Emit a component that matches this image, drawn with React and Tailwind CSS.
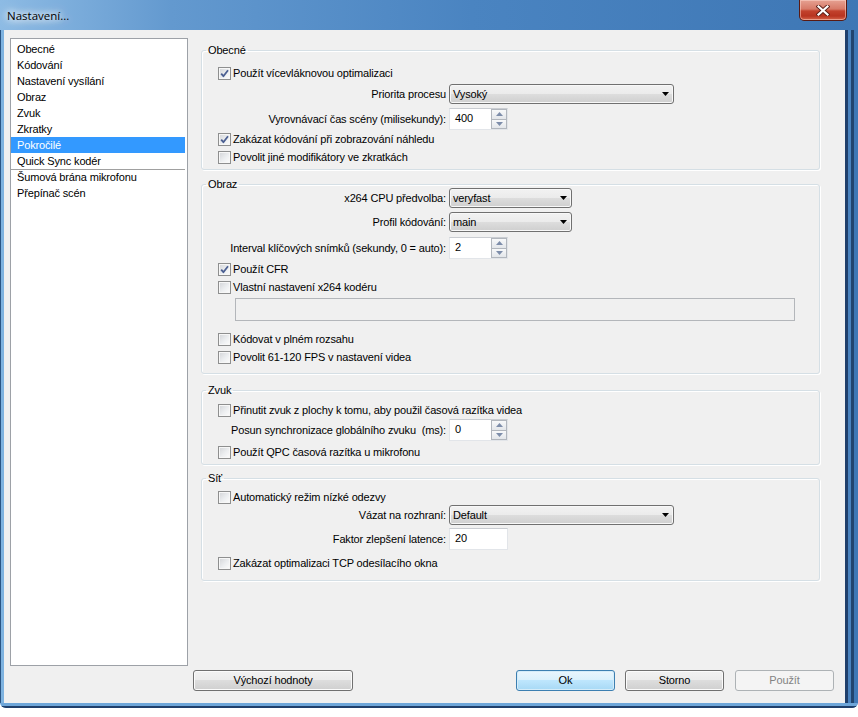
import React from "react";

function Box({ checked }) {
  return (
    <span className="flex w-[13px] h-[13px] shrink-0 border border-[#8e8f8f] bg-[#f7f7f7] p-px">
      <span className="flex flex-1 items-center justify-center bg-[linear-gradient(135deg,#d6d8db_0%,#eceef0_55%,#fafafa_100%)]">
        {checked && (
          <svg width="9" height="9" viewBox="0 0 9 9">
            <path d="M1.2 4.6 L3.4 7.2 L8 1.2" fill="none" stroke="#4b5f92" strokeWidth="1.8" strokeLinejoin="round" />
          </svg>
        )}
      </span>
    </span>
  );
}

function CheckRow({ checked, label, cls }) {
  return (
    <div className={"flex items-center " + cls}>
      <Box checked={checked} />
      <span className="ml-[2px] whitespace-nowrap">{label}</span>
    </div>
  );
}

function FieldRow({ label, cls, children }) {
  return (
    <div className={"flex items-center " + cls}>
      <div className="w-[228px] flex justify-end whitespace-pre">
        <span className="shrink-0">{label}</span>
      </div>
      <div className="ml-[3px] flex">{children}</div>
    </div>
  );
}

function Combo({ value, cls }) {
  return (
    <div className={"flex items-center h-[20px] border border-[#707070] rounded-[3px] bg-[linear-gradient(#f2f2f2_0%,#ebebeb_50%,#dddddd_50%,#cfcfcf_100%)] shadow-[inset_0_0_0_1px_#f8f8f8] pl-[3px] pr-[4px] " + cls}>
      <span className="flex-1 whitespace-nowrap">{value}</span>
      <svg width="7" height="4" viewBox="0 0 7 4">
        <path d="M0 0 H7 L3.5 4 Z" fill="#000" />
      </svg>
    </div>
  );
}

function SpinBtn({ up }) {
  return (
    <div className={"flex flex-1 items-center justify-center border border-[#b1b6bd] bg-[linear-gradient(#f8f9fa,#e3e6ea)] " + (up ? "" : "border-t-0")}>
      <svg width="7" height="4" viewBox="0 0 7 4">
        {up ? <path d="M0 4 L3.5 0 L7 4 Z" fill="#7d8daa" /> : <path d="M0 0 H7 L3.5 4 Z" fill="#7d8daa" />}
      </svg>
    </div>
  );
}

function Spin({ value }) {
  return (
    <div className="flex w-[59px] h-[22px] bg-white border border-[#e2e5e9] border-t-[#c9ccd1]">
      <div className="flex-1 pl-[5px] pt-[2px] leading-[14px]">{value}</div>
      <div className="flex flex-col w-[16px]">
        <SpinBtn up />
        <SpinBtn />
      </div>
    </div>
  );
}

function LineEdit({ value }) {
  return (
    <div className="w-[59px] h-[22px] bg-white border border-[#e2e5e9] border-t-[#c9ccd1] pl-[5px] pt-[2px] leading-[14px]">
      {value}
    </div>
  );
}

function Group({ title, cls, inner, children }) {
  return (
    <fieldset className={"m-0 p-0 border border-[#d5dfe5] rounded-[3px] shadow-[inset_1px_1px_0_#ffffff,1px_1px_0_#ffffff] " + cls}>
      <legend className="ml-[4px] px-[2px] leading-[12px]">{title}</legend>
      <div className={"flex flex-col pl-[16px] " + inner}>{children}</div>
    </fieldset>
  );
}

function Btn({ children, cls, kind }) {
  const skin =
    kind === "ok"
      ? "border-[#3c7fb1] bg-[linear-gradient(#eaf6fd_0%,#d9f0fc_50%,#bee6fd_50%,#a7d9f5_100%)] shadow-[inset_0_0_0_1px_#d5ecf9]"
      : kind === "off"
      ? "border-[#adb2b5] bg-[#f4f4f4] text-[#838383]"
      : "border-[#707070] bg-[linear-gradient(#f2f2f2_0%,#ebebeb_50%,#dddddd_50%,#cfcfcf_100%)] shadow-[inset_0_0_0_1px_#fbfbfb]";
  return (
    <div className={"h-[21px] flex items-center justify-center rounded-[3px] border " + skin + " " + cls}>
      {children}
    </div>
  );
}

const items = [
  "Obecné",
  "Kódování",
  "Nastavení vysílání",
  "Obraz",
  "Zvuk",
  "Zkratky",
  "Pokročilé",
  "Quick Sync kodér",
];

function ListBox() {
  return (
    <div className="ml-[6px] w-[178px] h-[628px] bg-white border border-[#9da1a7] pt-[2px] flex flex-col">
      {items.map((t) => (
        <div
          key={t}
          className={
            "h-[16px] mr-[2px] pl-[6px] flex items-center whitespace-nowrap " +
            (t === "Pokročilé" ? "bg-[#3399ff] text-white" : "")
          }
        >
          {t}
        </div>
      ))}
      <div className="h-[16px] mr-[2px] pl-[6px] flex items-center border-t border-[#a0a0a0] whitespace-nowrap">
        Šumová brána mikrofonu
      </div>
      <div className="h-[16px] mr-[2px] pl-[6px] flex items-center whitespace-nowrap">Přepínač scén</div>
    </div>
  );
}

function TitleBar() {
  return (
    <div className="h-[30px] flex items-start">
      <span className="ml-[7px] mt-[8px] leading-[15px] text-[11.5px] tracking-normal font-['Open_Sans','Liberation_Sans',sans-serif] [text-shadow:0_0_6px_#ffffff,0_0_10px_#ffffff,0_0_14px_#ffffff]">
        Nastavení...
      </span>
      <div className="ml-auto mr-[11px] w-[48px] h-[21px] flex items-center justify-center rounded-b-[5px] border border-t-0 border-[#5a1a12] bg-[linear-gradient(#e6a192_0%,#d77a68_45%,#c2412c_55%,#b83420_80%,#d6644a_100%)] shadow-[inset_0_0_0_1px_rgba(255,220,210,0.5)]">
        <svg width="14" height="11" viewBox="0 0 14 11">
          <path d="M2.5 1.5 L11.5 9.5 M11.5 1.5 L2.5 9.5" stroke="#5a1f18" strokeWidth="4" strokeLinecap="square" />
          <path d="M2.5 1.5 L11.5 9.5 M11.5 1.5 L2.5 9.5" stroke="#ffffff" strokeWidth="2.2" strokeLinecap="square" />
        </svg>
      </div>
    </div>
  );
}

function Client() {
  return (
    <div className="w-[841px] h-full bg-[#f0f0f0] flex flex-col pt-[8px] tracking-[-0.15px]">
      <div className="flex h-[628px]">
        <ListBox />
        <div className="ml-[13px] w-[619px] pt-[6px] flex flex-col">
          <Group title="Obecné" cls="" inner="pb-[3px]">
            <CheckRow checked cls="h-[18px] mt-[8px]" label="Použít vícevláknovou optimalizaci" />
            <FieldRow label="Priorita procesu" cls="h-[20px] mt-[2px]">
              <Combo value="Vysoký" cls="w-[225px]" />
            </FieldRow>
            <FieldRow label="Vyrovnávací čas scény (milisekundy):" cls="h-[22px] mt-[4px]">
              <Spin value="400" />
            </FieldRow>
            <CheckRow checked cls="h-[18px]" label="Zakázat kódování při zobrazování náhledu" />
            <CheckRow cls="h-[18px]" label="Povolit jiné modifikátory ve zkratkách" />
          </Group>

          <Group title="Obraz" cls="mt-[8px]" inner="pb-[7px]">
            <FieldRow label="x264 CPU předvolba:" cls="h-[20px] mt-[-2px]">
              <Combo value="veryfast" cls="w-[123px]" />
            </FieldRow>
            <FieldRow label="Profil kódování:" cls="h-[20px] mt-[4px]">
              <Combo value="main" cls="w-[123px]" />
            </FieldRow>
            <FieldRow label="Interval klíčových snímků (sekundy, 0 = auto):" cls="h-[22px] mt-[5px]">
              <Spin value="2" />
            </FieldRow>
            <CheckRow checked cls="h-[18px] mt-[1px]" label="Použít CFR" />
            <CheckRow cls="h-[18px]" label="Vlastní nastavení x264 kodéru" />
            <div className="ml-[17px] mt-[2px] w-[560px] h-[23px] border border-[#b3b6ba] bg-[#f0f0f0]" />
            <CheckRow cls="h-[18px] mt-[9px]" label="Kódovat v plném rozsahu" />
            <CheckRow cls="h-[18px]" label="Povolit 61-120 FPS v nastavení videa" />
          </Group>

          <Group title="Zvuk" cls="mt-[10px]" inner="pb-[3px]">
            <CheckRow cls="h-[18px] mt-[5px]" label="Přinutit zvuk z plochy k tomu, aby použil časová razítka videa" />
            <FieldRow label="Posun synchronizace globálního zvuku  (ms):" cls="h-[22px]">
              <Spin value="0" />
            </FieldRow>
            <CheckRow cls="h-[18px] mt-[2px]" label="Použít QPC časová razítka u mikrofonu" />
          </Group>

          <Group title="Síť" cls="mt-[7px]" inner="pb-[8px]">
            <CheckRow cls="h-[16px] mt-[5px]" label="Automatický režim nízké odezvy" />
            <FieldRow label="Vázat na rozhraní:" cls="h-[20px]">
              <Combo value="Default" cls="w-[225px]" />
            </FieldRow>
            <FieldRow label="Faktor zlepšení latence:" cls="h-[22px] mt-[3px]">
              <LineEdit value="20" />
            </FieldRow>
            <CheckRow cls="h-[18px] mt-[4px]" label="Zakázat optimalizaci TCP odesílacího okna" />
          </Group>
        </div>
      </div>
      <div className="flex mt-[4px]">
        <Btn cls="ml-[189px] w-[160px]">Výchozí hodnoty</Btn>
        <Btn kind="ok" cls="ml-auto w-[99px]">Ok</Btn>
        <Btn cls="ml-[10px] w-[99px]">Storno</Btn>
        <Btn kind="off" cls="ml-[11px] mr-[11px] w-[99px]">Použít</Btn>
      </div>
    </div>
  );
}

export default function App() {
  return (
    <div className="w-[858px] h-[717px] bg-white font-['Liberation_Sans',Arial,sans-serif] text-[11px] text-black overflow-hidden">
      <div className="h-[708px] flex flex-col rounded-b-[6px] overflow-hidden bg-[linear-gradient(90deg,#8dbbe4_0%,#6399cf_20%,#4a84c1_55%,#3e77b5_100%)]">
        <TitleBar />
        <div className="flex h-[673px]">
          <div className="w-[4px] flex">
            <div className="w-[1px] bg-[#2b5584]" />
            <div className="w-[3px] bg-[#7fb3e0]" />
          </div>
          <Client />
          <div className="flex w-[13px]">
            <div className="w-[3px] bg-[#1f3f6b]" />
            <div className="w-[3px] bg-[#4a83bf]" />
            <div className="w-[3px] bg-[#22456f]" />
            <div className="w-[4px] bg-[#3f78b6]" />
          </div>
        </div>
        <div className="h-[5px] flex flex-col">
          <div className="h-[3px] bg-[#6ea6d9]" />
          <div className="h-[2px] bg-[#1f3f6b]" />
        </div>
      </div>
    </div>
  );
}
